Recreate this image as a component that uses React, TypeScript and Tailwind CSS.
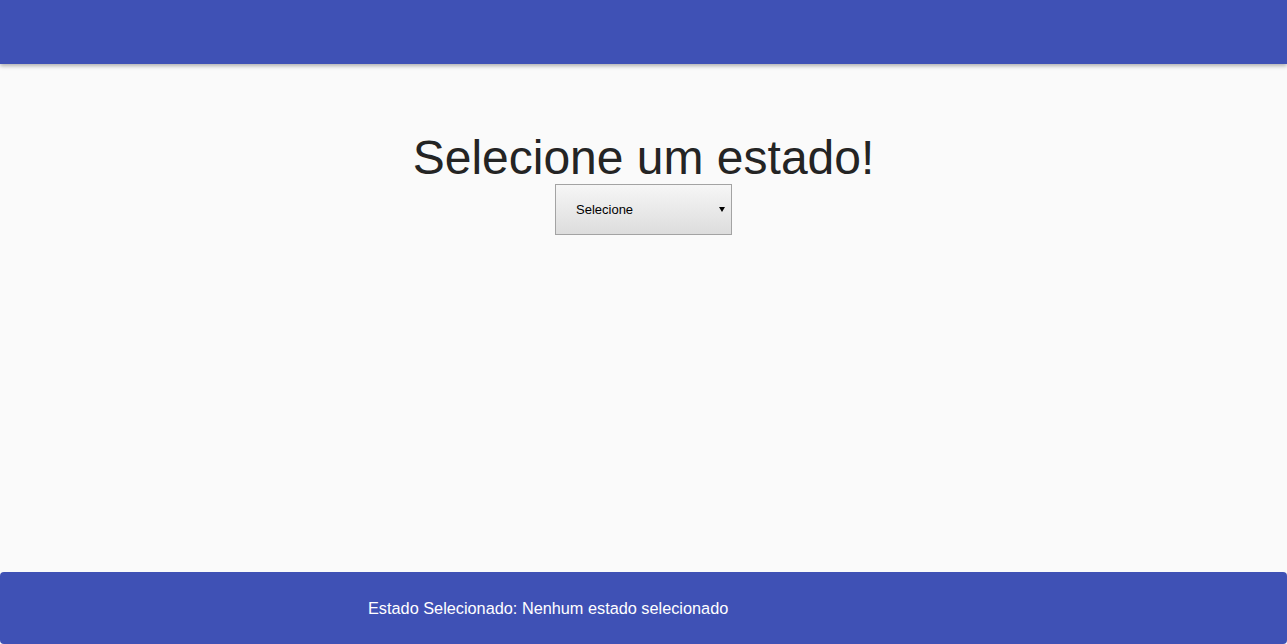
export default function App() {
  return (
    <div className="flex min-h-screen flex-col bg-[#fafafa] font-['Liberation_Sans',Arial,sans-serif]">
      <header className="h-16 bg-[#3f51b5] shadow-[0_2px_4px_rgba(0,0,0,0.3)]" />
      <main className="flex flex-1 flex-col items-center">
        <h1 className="mt-[67px] text-[48px] leading-[53px] text-[#242424]">Selecione um estado!</h1>
        <div className="flex h-[51px] w-[177px] items-center justify-between border border-[#a3a3a3] bg-gradient-to-b from-[#f6f6f6] to-[#dddddd] pl-5 pr-[6px] text-[13px] text-black">
          <span>Selecione</span>
          <svg width="6" height="5" viewBox="0 0 6 5" className="mt-[-1px]">
            <path d="M0 0h6L3 5z" fill="#000" />
          </svg>
        </div>
      </main>
      <footer className="flex h-[72px] items-center rounded bg-[#3f51b5] pl-[368px] text-[16.3px] text-white">
        Estado Selecionado: Nenhum estado selecionado
      </footer>
    </div>
  )
}
